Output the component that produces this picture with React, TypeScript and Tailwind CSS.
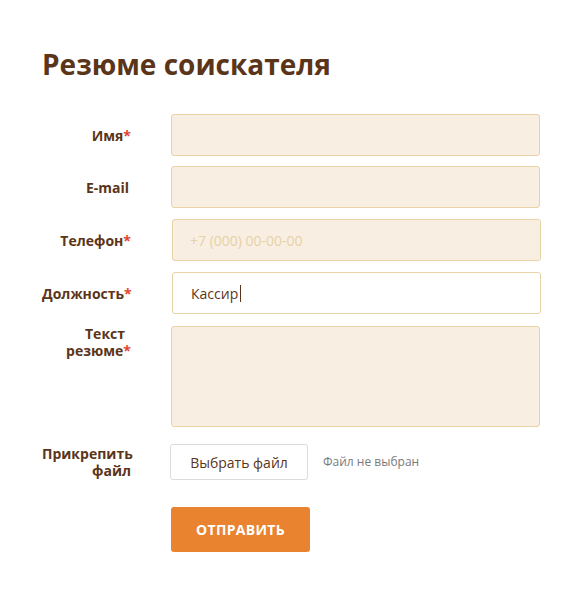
import React from "react";

const Req = () => <span className="text-[#e2452b]">*</span>;

const labelCls = "w-[89px] shrink-0 text-right text-[14px] leading-[17px] font-bold text-[#5b3519]";
const inputCls =
  "w-[369px] h-[42px] rounded-[3px] border border-[#e8d2a6] bg-[#f8efe2] px-[17px] text-[14px] text-[#5b3519] outline-none placeholder:text-[#e6d1a8]";

const App: React.FC = () => {
  return (
    <div className="min-h-[605px] bg-white pl-[42px] pt-[47px] font-['Open_Sans',sans-serif]">
      <h1 className="text-[28px] leading-[34px] font-bold text-[#5b3519]">Резюме соискателя</h1>

      <form className="mt-[33px] flex flex-col" onSubmit={(e) => e.preventDefault()}>
        {/* Имя */}
        <div className="flex items-center gap-[40px]">
          <label className={labelCls}>
            Имя<Req />
          </label>
          <input className={inputCls} />
        </div>

        {/* E-mail */}
        <div className="mt-[10px] flex items-center gap-[40px]">
          <label className={labelCls + " pr-[2px]"}>E-mail</label>
          <input className={inputCls} />
        </div>

        {/* Телефон */}
        <div className="mt-[11px] flex items-center gap-[41px]">
          <label className={labelCls}>
            Телефон<Req />
          </label>
          <input className={inputCls} placeholder="+7 (000) 00-00-00" />
        </div>

        {/* Должность — focused field */}
        <div className="mt-[11px] flex items-center gap-[41px]">
          <label className={labelCls}>
            Должность<Req />
          </label>
          <div className="flex h-[42px] w-[369px] items-center rounded-[3px] border border-[#e8d2a6] bg-white pl-[18px] text-[14px] text-[#5b3519]">
            Кассир
            <span className="ml-[2px] inline-block h-[17px] w-px bg-[#5b3519]" />
          </div>
        </div>

        {/* Текст резюме */}
        <div className="mt-[12px] flex items-start gap-[40px]">
          <label className={labelCls + " -mt-[1px]"}>
            <span className="block pr-[6px]">Текст</span>
            <span className="block">
              резюме<Req />
            </span>
          </label>
          <textarea className={inputCls + " h-[101px] resize-none py-2"} />
        </div>

        {/* Файл */}
        <div className="mt-[17px] flex items-center gap-[39px]">
          <label className={labelCls}>
            Прикрепить
            <br />
            файл
          </label>
          <button
            type="button"
            className="h-[36px] w-[138px] rounded-[3px] border border-[#dcdcdc] bg-white text-[14px] text-[#5b3519]"
          >
            Выбрать файл
          </button>
          <span className="-ml-[24px] text-[12px] text-[#7a7a7a]">Файл не выбран</span>
        </div>

        {/* Отправить */}
        <div className="mt-[27px] pl-[129px]">
          <button
            type="submit"
            className="h-[45px] w-[139px] rounded-[3px] bg-[#e9832f] text-[14px] font-bold tracking-[0.3px] text-white"
          >
            ОТПРАВИТЬ
          </button>
        </div>
      </form>
    </div>
  );
};

export default App;
